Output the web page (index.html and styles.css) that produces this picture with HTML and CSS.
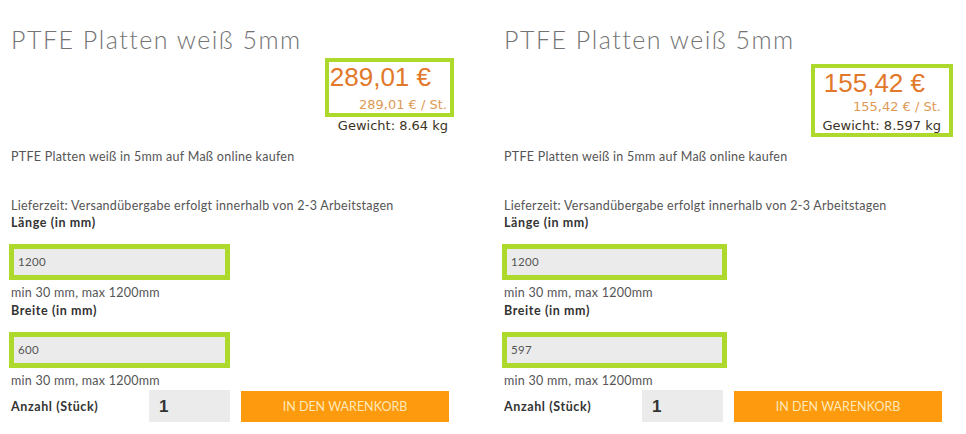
FILE: index.html
```html
<!DOCTYPE html>
<html lang="de">
<head>
    <meta charset="UTF-8">
    <meta name="viewport" content="width=device-width, initial-scale=1.0">
    <title>PTFE Platten weiß 5mm</title>
    <link rel="stylesheet" href="styles.css">
</head>
<body>
    <div class="vergleich">
        <div class="produkt">
            <h1 class="titel">PTFE Platten weiß 5mm</h1>
            <div class="preisbereich">
                <div class="preis-box">
                    <div class="preis">289,01 €</div>
                    <div class="stueckpreis">289,01 € / St.</div>
                </div>
                <div class="gewicht">Gewicht: 8.64 kg</div>
            </div>
            <p class="beschreibung">PTFE Platten weiß in 5mm auf Maß online kaufen</p>
            <p class="lieferzeit">Lieferzeit: Versandübergabe erfolgt innerhalb von 2-3 Arbeitstagen</p>

            <label class="feld-label">Länge (in mm)</label>
            <div class="feld markiert">1200</div>
            <div class="hinweis">min 30 mm, max 1200mm</div>

            <label class="feld-label">Breite (in mm)</label>
            <div class="feld markiert">600</div>
            <div class="hinweis">min 30 mm, max 1200mm</div>

            <div class="warenkorb">
                <span class="anzahl-label">Anzahl (Stück)</span>
                <div class="anzahl">1</div>
                <button class="warenkorb-btn">In den Warenkorb</button>
            </div>
        </div>

        <div class="produkt">
            <h1 class="titel">PTFE Platten weiß 5mm</h1>
            <div class="preisbereich">
                <div class="preis-box mit-gewicht">
                    <div class="preis">155,42 €</div>
                    <div class="stueckpreis">155,42 € / St.</div>
                    <div class="gewicht">Gewicht: 8.597 kg</div>
                </div>
            </div>
            <p class="beschreibung">PTFE Platten weiß in 5mm auf Maß online kaufen</p>
            <p class="lieferzeit">Lieferzeit: Versandübergabe erfolgt innerhalb von 2-3 Arbeitstagen</p>

            <label class="feld-label">Länge (in mm)</label>
            <div class="feld markiert breit">1200</div>
            <div class="hinweis">min 30 mm, max 1200mm</div>

            <label class="feld-label">Breite (in mm)</label>
            <div class="feld markiert breit">597</div>
            <div class="hinweis">min 30 mm, max 1200mm</div>

            <div class="warenkorb">
                <span class="anzahl-label">Anzahl (Stück)</span>
                <div class="anzahl">1</div>
                <button class="warenkorb-btn">In den Warenkorb</button>
            </div>
        </div>
    </div>
</body>
</html>
```
FILE: styles.css
```css
body {
    margin: 0;
    background-color: #fff;
    font-family: 'Lato', 'Open Sans', sans-serif;
    color: #555;
}
.vergleich {
    display: grid;
    grid-template-columns: 446px 446px;
    gap: 47px;
    padding: 24px 0 0 9px;
}
.produkt {
    display: flex;
    flex-direction: column;
}
.titel {
    margin: 0 0 0 2px;
    font-size: 25px;
    line-height: 30px;
    font-weight: 300;
    letter-spacing: 1.5px;
    color: #737373;
}
.preisbereich {
    height: 94px;
    display: flex;
    flex-direction: column;
    align-items: flex-end;
}
.preis-box {
    margin: 4px 1px 0 0;
    border: 4px solid #acd92b;
    padding: 0 3px 1px 1px;
    display: flex;
    flex-direction: column;
}
.preis {
    padding-right: 16px;
    font-family: 'Liberation Sans', Arial, sans-serif;
    font-size: 26px;
    line-height: 30px;
    color: #e2782a;
}
.stueckpreis,
.gewicht {
    font-family: 'DejaVu Sans', Verdana, sans-serif;
    font-size: 13px;
    line-height: 14px;
    text-align: right;
}
.stueckpreis {
    margin-top: 6px;
    color: #dd9a55;
}
.gewicht {
    margin: 2px 7px 0 0;
    color: #3b3325;
}
.preis-box.mit-gewicht {
    margin: 10px -5px 0 0;
    padding: 0 8px 0 4px;
}
.preis-box.mit-gewicht .preis {
    padding-left: 5px;
}
.preis-box.mit-gewicht .stueckpreis {
    margin-top: 2px;
}
.preis-box.mit-gewicht .gewicht {
    margin: 5px 0 0 0;
}
.beschreibung,
.lieferzeit {
    margin: 0 0 0 2px;
    font-size: 12.5px;
    line-height: 17px;
    letter-spacing: 0.27px;
    color: #555;
}
.lieferzeit {
    margin-top: 32px;
}
.feld-label,
.anzahl-label {
    font-size: 12.5px;
    line-height: 17px;
    font-weight: 700;
    letter-spacing: 0.6px;
    color: #333;
    margin-left: 2px;
}
.feld {
    width: 207px;
    height: 26px;
    margin-top: 13px;
    padding-left: 4px;
    background-color: #ebebeb;
    font-size: 11.5px;
    line-height: 26px;
    letter-spacing: 0.3px;
    color: #555;
}
.feld.breit {
    width: 211px;
}
.markiert {
    border: 5px solid #acd92b;
}
.hinweis {
    margin: 3px 0 0 2px;
    font-size: 12.5px;
    line-height: 19px;
    letter-spacing: 0.27px;
    color: #555;
}
.warenkorb {
    display: flex;
    align-items: center;
    height: 32px;
}
.anzahl-label {
    width: 138px;
}
.anzahl {
    width: 71px;
    height: 32px;
    padding-left: 10px;
    background-color: #ebebeb;
    font-family: 'Liberation Sans', Arial, sans-serif;
    font-size: 17px;
    font-weight: 700;
    line-height: 34px;
    color: #333;
}
.warenkorb-btn {
    margin-left: 11px;
    width: 208px;
    height: 31px;
    border: none;
    background-color: #fd9a0d;
    color: #ffe8b8;
    font-family: 'Lato', 'Open Sans', sans-serif;
    font-size: 12.5px;
    text-transform: uppercase;
    cursor: pointer;
}
```
